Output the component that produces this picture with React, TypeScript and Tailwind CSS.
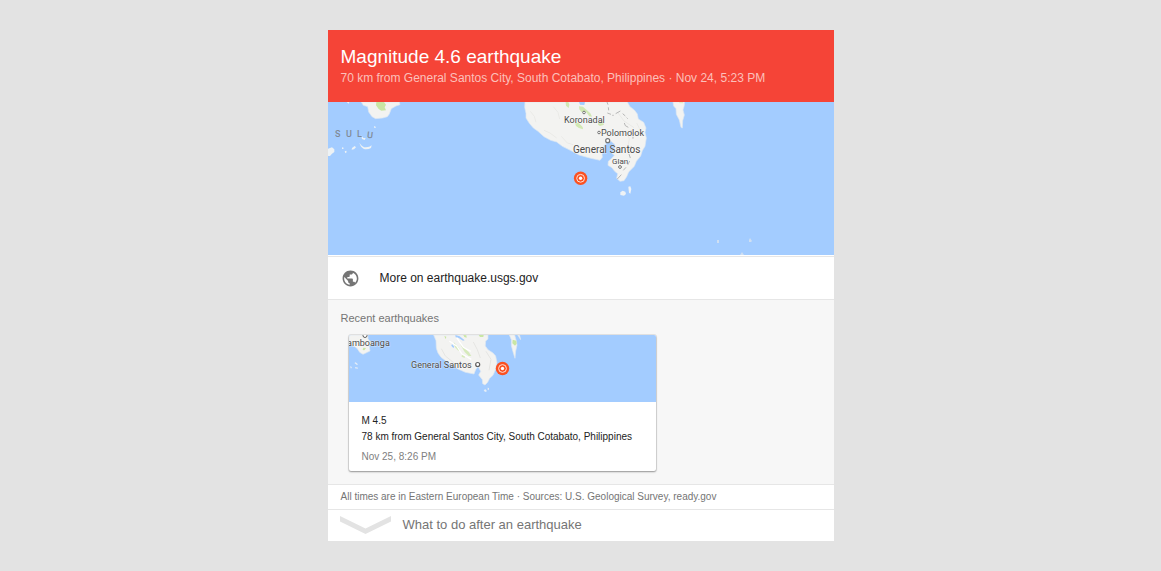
function Epicenter({ x, y }: { x: number; y: number }) {
  return (
    <g transform={`translate(${x} ${y})`}>
      <circle r="6.7" fill="#fb5121" />
      <circle r="3.9" fill="none" stroke="#ffe3da" strokeWidth="1" />
      <circle r="1.7" fill="#fff" />
    </g>
  );
}

const label = "font-['Roboto',sans-serif] [paint-order:stroke] stroke-white/50 stroke-1 fill-[#4a4a4a]";

function RegionMap() {
  return (
    <svg viewBox="0 0 506 153" className="block w-full bg-[#a3ccff]" role="img" aria-label="Map of the epicenter south of General Santos">
      <g transform="translate(-4 -4) scale(.33333)">
        <path fill="#f3f3f1" stroke="#d9e6f5" strokeWidth="2" d="M112 12 118 22 131 26 134 42 144 56 155 62 176 60 190 56 196 48 202 32 216 24 228 20 226 12Z" />
        <path fill="#c9e6a4" d="M157 12 156 22 164 33 172 38 186 37 182 28 186 20 180 12Z" />
        <g fill="#edf2f5">
          <path d="M12 152 24 148 31 154 31 162 24 167 18 174 12 174Z" />
          <path d="M84 150 92 144 96 148 90 154 83 155Z" />
          <path d="M106 134Q115 148 126 148 137 148 143 142L141 150Q132 155 120 153 110 148 106 134Z" />
          <path d="M62 160 67 158 68 163 64 166ZM54 148 59 149 58 153 54 153ZM150 84 155 86 155 90 151 90ZM68 12 76 12 74 17Z" />
          <path d="M112 112 118 120 125 120 122 126 114 123Z" />
        </g>
      </g>
      <g transform="translate(182 -4) scale(.33333)">
        <path
          fill="#f3f3f1"
          stroke="#dce7f2"
          strokeWidth="2"
          d="M45 12 44 28 48 46 48 60 58 76 70 90 84 100 102 116 122 127 140 132 157 145 181 157 207 171 239 180 270 187 277 178 276 167 283 160 282 143 290 134 303 130 314 139 313 156 306 166 313 172 305 181 295 190 294 202 306 209 314 220 323 227 320 241 330 250 342 248 350 236 356 222 373 205 379 190 392 174 397 158 405 145 409 120 405 103 408 90 401 73 385 63 382 48 373 36 360 26 352 12Z"
        />
        <path fill="#a3ccff" d="M207 12 210 20 223 21 225 12Z" />
        <g fill="#c9e6a4" opacity=".8">
          <path d="M167 12 168 23 176 30 178 20 175 12ZM207 25 219 26 230 36 241 46 246 56 238 55 229 43 214 42 208 34Z" />
          <path d="M194 72 207 76 218 87 219 94 207 90 198 84ZM265 74 278 70 282 80 270 84 264 80Z" />
        </g>
        <g fill="none" stroke="#eaeae7" strokeWidth="3">
          <path d="m61 40 12 15 5 18m24 24 18 8 20 15m14-5 18 20 18 5M130 26l14 17 5 20M348 98l10 25-5 25M322 42l20 27 30 20M380 75l15 30" />
        </g>
        <g fill="none" stroke="#aaa" strokeWidth="2.5">
          <path d="M291 12 294 20M295 28 296 37M292 45 303 49M307 52 311 52M317 47 331 39M338 47 346 54M350 59 353 62M343 75 346 83 355 88M363 97 366 108M369 116 369 122M364 145 361 160M357 168 361 180M359 189 353 201M348 208 340 217M334 230 322 243" />
        </g>
        <path fill="#f3f3f1" stroke="#dce7f2" strokeWidth="2" d="M489 12 491 24 498 32 499 49 508 66 513 88 517 90 518 68 523 51 519 36 523 22 523 12Z" />
        <path fill="#e0edc9" d="M507 12 509 16 519 16 519 12Z" />
        <path fill="#eef2f5" d="M331 283 338 278 346 281 348 288 342 293 331 291ZM355 266 361 265 364 273 361 287 357 284Z" />
      </g>
      <g fill="#cfdff2">
        <path d="M389 138h2v3h-2zM421 138l1-2 2 3-1 1h-2zM412 153l2-3 2 3z" />
      </g>
      <g fill="#fff" stroke="#747474">
        <circle cx="256" cy="10.5" r="1.3" />
        <circle cx="271" cy="30.5" r="1.3" />
        <circle cx="279.7" cy="38.7" r="2" strokeWidth="1.2" />
        <circle cx="292" cy="65" r="1.4" />
      </g>
      <g className={label}>
        <text x="236" y="21" fontSize="9">Koronadal</text>
        <text x="273" y="34" fontSize="9">Polomolok</text>
        <text x="245" y="51" fontSize="10">General Santos</text>
        <text x="284" y="62" fontSize="8">Glan</text>
      </g>
      <g className="fill-[#808a97] font-['Roboto',sans-serif] font-medium" fontSize="9">
        <text x="7" y="35">S</text>
        <text x="18" y="35">U</text>
        <text x="29" y="35">L</text>
        <text x="39" y="36" transform="rotate(7 41 33)">U</text>
      </g>
      <Epicenter x={252.6} y={76.3} />
    </svg>
  );
}

function RecentMap() {
  return (
    <svg viewBox="0 0 307 67" className="block w-full bg-[#a3ccff]" role="img" aria-label="Map of the epicenter east of General Santos">
      <g transform="translate(-9 -7) scale(.33333)">
        <g fill="#f3f3f1" stroke="#dce7f2" strokeWidth="2">
          <path d="M27 21 84 21 84 33 94 44 88 54 90 69 82 73 69 79 59 73 52 62 45 56 27 50Z" />
          <path d="M281 21 288 38 289 61 294 75 303 88 317 98 335 111 354 123 376 133 402 138 407 125 414 115 422 130 416 141 427 155 428 167 435 171 443 163 449 151 459 142 466 126 471 104 467 84 459 75 444 65 436 54 437 39 444 33 444 21Z" />
          <path d="M508 21 514 35 514 53 520 75 525 91 527 70 531 52 529 38 524 21ZM533 21 542 35 539 22Z" />
        </g>
        <path fill="#a3ccff" d="M346 21 359 25 374 37 369 38 356 30 347 28ZM336 48 343 56 340 60 334 53Z" />
        <g fill="#c9e6a4">
          <path d="M518 35 529 38 530 47 525 53 517 46ZM416 21 431 21 430 27 420 27ZM70 59 78 60 73 67 68 66ZM313 24 319 26 317 34ZM370 21 379 22 380 29 373 27Z" />
          <path opacity=".7" d="M341 43 352 53 360 65 355 68 345 58ZM360 48 375 62 386 72 394 84 386 84 374 72ZM366 79 375 85 374 90 365 86Z" />
        </g>
        <path fill="none" stroke="#fff" strokeWidth="4" d="m328 39 22 15 16 24 28 16M350 29l20 29 22 12" />
        <path fill="none" stroke="#e5e5e2" strokeWidth="3" d="m304 62 12 22 25 20M400 42l12 23 9 25M438 70l15 24-6 33" />
        <path fill="#e6eef7" d="M431 186 437 184 441 190 435 192ZM443 179 447 180 446 187 443 185ZM43 105 47 103 54 109 51 111ZM30 115 36 117 33 122ZM46 117 54 119 53 122 45 121Z" />
      </g>
      <g fill="#fff" stroke="#5e5e5e">
        <circle cx="16" cy="0.5" r="2" />
        <circle cx="128.7" cy="29.5" r="2" strokeWidth="1.2" />
      </g>
      <g className={label} fontSize="9">
        <text x="-2" y="11">amboanga</text>
        <text x="62" y="33">General Santos</text>
      </g>
      <Epicenter x={153.5} y={33.5} />
    </svg>
  );
}

export default function App() {
  return (
    <div className="min-h-screen bg-[#e3e3e3] py-[30px] font-['Liberation_Sans',Arial,sans-serif]">
      <main className="mx-auto w-full max-w-[506px] bg-white">
        <header className="bg-[#f54437] px-[13px] pt-4 pb-[14px]">
          <h1 className="text-[19px] leading-[22px] text-white">Magnitude 4.6 earthquake</h1>
          <p className="text-xs leading-5 text-[#fcc0bb]">
            70 km from General Santos City, South Cotabato, Philippines · Nov 24, 5:23 PM
          </p>
        </header>
        <RegionMap />
        <a href="https://earthquake.usgs.gov" className="mt-px flex h-11 items-center gap-5 border-y border-[#e6e6e6] px-[13px] text-xs text-[#222]">
          <svg viewBox="0 0 24 24" className="size-[19px] fill-[#757575]" aria-hidden="true">
            <path d="M12 2C6.48 2 2 6.48 2 12s4.48 10 10 10 10-4.48 10-10S17.52 2 12 2zm-1 17.93c-3.95-.49-7-3.85-7-7.93 0-.62.08-1.21.21-1.79L9 15v1c0 1.1.9 2 2 2v1.93zm6.9-2.54c-.26-.81-1-1.39-1.9-1.39h-1v-3c0-.55-.45-1-1-1H8v-2h2c.55 0 1-.45 1-1V7h2c1.1 0 2-.9 2-2v-.41c2.93 1.19 5 4.06 5 7.41 0 2.08-.8 3.97-2.1 5.39z" />
          </svg>
          <span>More on earthquake.usgs.gov</span>
        </a>
        <section className="border-b border-[#e6e6e6] bg-[#f7f7f7] pt-[10px] pb-[13px]">
          <h2 className="px-[13px] text-[11px] leading-4 text-[#757575]">Recent earthquakes</h2>
          <article className="mt-[9px] ml-[21px] max-w-[307px] overflow-hidden rounded-xs bg-white shadow-[0_0_0_1px_rgba(0,0,0,0.08),0_1px_2px_rgba(0,0,0,0.35)]">
            <RecentMap />
            <div className="px-[13px] pt-[11px] pb-[6px] text-[10px] leading-4 text-[#222]">
              <h3>M 4.5</h3>
              <p>78 km from General Santos City, South Cotabato, Philippines</p>
              <p className="mt-1 text-[#808080]">Nov 25, 8:26 PM</p>
            </div>
          </article>
        </section>
        <p className="border-b border-[#e6e6e6] px-[13px] py-1 text-[10px] leading-4 text-[#757575]">
          All times are in Eastern European Time · Sources: U.S. Geological Survey, ready.gov
        </p>
        <button type="button" className="flex h-[31px] w-full items-center gap-3 px-3 pb-px text-left text-[13px] text-[#757575]">
          <svg viewBox="0 0 51 18" className="h-[18px] w-[51px] fill-[#e3e3e3]" aria-hidden="true">
            <path d="M0 0 25.5 12.5 51 0V5.5L25.5 18 0 5.5Z" />
          </svg>
          <span>What to do after an earthquake</span>
        </button>
      </main>
    </div>
  );
}
